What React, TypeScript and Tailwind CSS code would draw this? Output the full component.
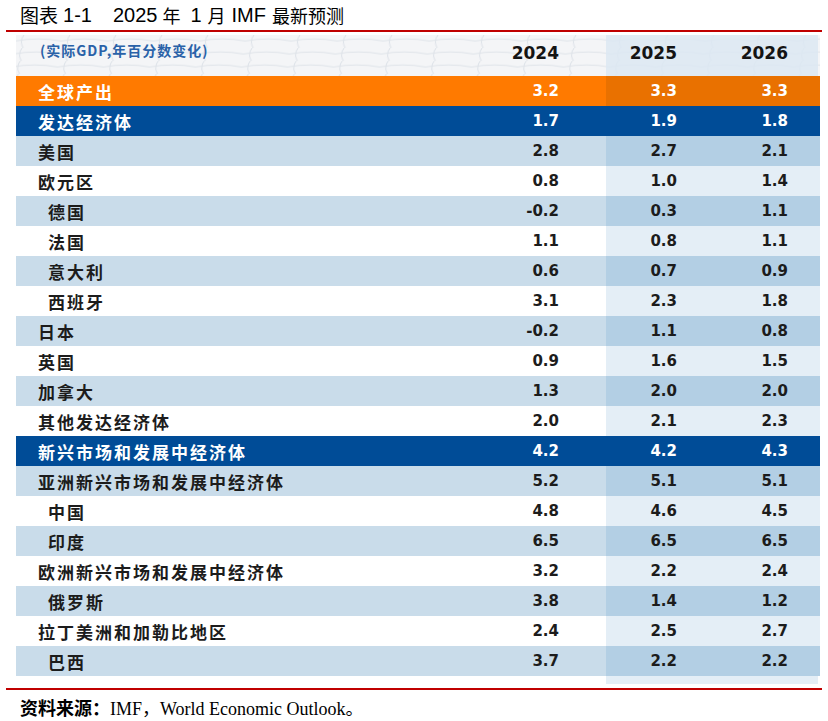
import React from 'react';

type Row = {
  label: string;
  v: [string, string, string];
  kind: 'orange' | 'blue' | 'light' | 'white';
  indent?: boolean;
};

const rows: Row[] = [
  { label: '全球产出', v: ['3.2', '3.3', '3.3'], kind: 'orange' },
  { label: '发达经济体', v: ['1.7', '1.9', '1.8'], kind: 'blue' },
  { label: '美国', v: ['2.8', '2.7', '2.1'], kind: 'light' },
  { label: '欧元区', v: ['0.8', '1.0', '1.4'], kind: 'white' },
  { label: '德国', v: ['-0.2', '0.3', '1.1'], kind: 'light', indent: true },
  { label: '法国', v: ['1.1', '0.8', '1.1'], kind: 'white', indent: true },
  { label: '意大利', v: ['0.6', '0.7', '0.9'], kind: 'light', indent: true },
  { label: '西班牙', v: ['3.1', '2.3', '1.8'], kind: 'white', indent: true },
  { label: '日本', v: ['-0.2', '1.1', '0.8'], kind: 'light' },
  { label: '英国', v: ['0.9', '1.6', '1.5'], kind: 'white' },
  { label: '加拿大', v: ['1.3', '2.0', '2.0'], kind: 'light' },
  { label: '其他发达经济体', v: ['2.0', '2.1', '2.3'], kind: 'white' },
  { label: '新兴市场和发展中经济体', v: ['4.2', '4.2', '4.3'], kind: 'blue' },
  { label: '亚洲新兴市场和发展中经济体', v: ['5.2', '5.1', '5.1'], kind: 'light' },
  { label: '中国', v: ['4.8', '4.6', '4.5'], kind: 'white', indent: true },
  { label: '印度', v: ['6.5', '6.5', '6.5'], kind: 'light', indent: true },
  { label: '欧洲新兴市场和发展中经济体', v: ['3.2', '2.2', '2.4'], kind: 'white' },
  { label: '俄罗斯', v: ['3.8', '1.4', '1.2'], kind: 'light', indent: true },
  { label: '拉丁美洲和加勒比地区', v: ['2.4', '2.5', '2.7'], kind: 'white' },
  { label: '巴西', v: ['3.7', '2.2', '2.2'], kind: 'light', indent: true },
];

// 左两列 / 右两列（2025、2026 高亮列）的底色
const colors = {
  orange: { left: 'bg-[#ff7a00]', right: 'bg-[#e97100]', text: 'text-white' },
  blue: { left: 'bg-[#004c97]', right: 'bg-[#004c97]', text: 'text-white' },
  light: { left: 'bg-[#c9dcea]', right: 'bg-[#b3cfe4]', text: 'text-[#1c1c1c]' },
  white: { left: 'bg-white', right: 'bg-[#e4eef6]', text: 'text-[#1c1c1c]' },
};

const num = "font-['DejaVu_Sans',sans-serif] font-bold text-[15px] leading-none pt-[1px]";
const cjk = "font-['Noto_Sans_CJK_SC',sans-serif]";

const HeaderGrid: React.FC = () => (
  <svg className="absolute inset-0 w-full h-full" viewBox="0 0 804 41" preserveAspectRatio="none">
    <defs>
      <pattern id="g" width="46" height="13" patternUnits="userSpaceOnUse" patternTransform="skewX(-8)">
        <path d="M0 6 Q23 2 46 6 M8 0 Q4 6 9 13" fill="none" stroke="#dde2e8" strokeWidth="1" />
      </pattern>
    </defs>
    <rect width="804" height="41" fill="#f4f5f7" />
    <rect width="804" height="41" fill="url(#g)" />
  </svg>
);

const TableRow: React.FC<{ row: Row }> = ({ row }) => {
  const c = colors[row.kind];
  return (
    <div className={`flex h-[30px] ${c.text}`}>
      <div className={`w-[454px] flex items-center ${c.left} ${row.indent ? 'pl-[32px]' : 'pl-[22px]'}`}>
        <span className={`${cjk} font-bold text-[17px] tracking-[2px] leading-none`}>{row.label}</span>
      </div>
      <div className={`w-[136px] flex items-center justify-end pr-[47px] ${c.left} ${num}`}>{row.v[0]}</div>
      <div className={`w-[106px] flex items-center justify-end pr-[35px] ${c.right} ${num}`}>{row.v[1]}</div>
      <div className={`w-[108px] flex items-center justify-end pr-[32px] ${c.right} ${num}`}>{row.v[2]}</div>
    </div>
  );
};

export default function App() {
  return (
    <div className="w-[828px] h-[721px] bg-white overflow-hidden">
      {/* 标题 */}
      <div className="h-[30px] pl-[20px] flex items-center text-[20px] text-black font-['Liberation_Sans','Noto_Sans_CJK_SC',sans-serif]">
        <span className={`${cjk} text-[19px]`}>图表</span>
        <span className="ml-[5px]">1-1</span>
        <span className="ml-[21px]">2025</span>
        <span className={`${cjk} text-[18px] ml-[5px]`}>年</span>
        <span className="ml-[10px]">1</span>
        <span className={`${cjk} text-[18px] ml-[6px]`}>月</span>
        <span className="ml-[6px]">IMF</span>
        <span className={`${cjk} text-[18px] ml-[6px]`}>最新预测</span>
      </div>
      <div className="mx-[6px] h-[2px] bg-[#c00000]" />

      {/* 表格 */}
      <div className="ml-[16px] w-[804px] mt-[3px]">
        <div className="relative flex h-[41px]">
          <HeaderGrid />
          <div className="relative w-[454px] pl-[24px] pt-[3px]">
            <span className={`${cjk} font-bold text-[14px] tracking-[1px] text-[#2a62a8]`}>(实际GDP,年百分数变化)</span>
          </div>
          <div className="relative w-[136px] flex items-center justify-end pr-[47px] pb-[4px] font-['DejaVu_Sans',sans-serif] font-bold text-[17px] text-[#141414]">2024</div>
          <div className="relative w-[212px] flex bg-[#dce8f2]/85">
            <div className="w-[106px] flex items-center justify-end pr-[35px] pb-[4px] font-['DejaVu_Sans',sans-serif] font-bold text-[17px] text-[#141414]">2025</div>
            <div className="w-[106px] flex items-center justify-end pr-[30px] pb-[4px] font-['DejaVu_Sans',sans-serif] font-bold text-[17px] text-[#141414]">2026</div>
          </div>
        </div>
        {rows.map((r) => (
          <TableRow key={r.label} row={r} />
        ))}
        <div className="flex h-[8px]">
          <div className="w-[590px]" />
          <div className="w-[212px] bg-[#e4eef6]" />
        </div>
      </div>

      <div className="mx-[6px] mt-[4px] h-[2px] bg-[#c00000]" />

      {/* 资料来源 */}
      <div className="pl-[20px] mt-[5px] text-[18px] leading-[24px] text-black font-['Liberation_Serif','Noto_Sans_CJK_SC',serif]">
        <span className={`${cjk} font-bold`}>资料来源：</span>
        <span>IMF</span>
        <span className={cjk}>，</span>
        <span>World Economic Outlook</span>
        <span className={cjk}>。</span>
      </div>
    </div>
  );
}
